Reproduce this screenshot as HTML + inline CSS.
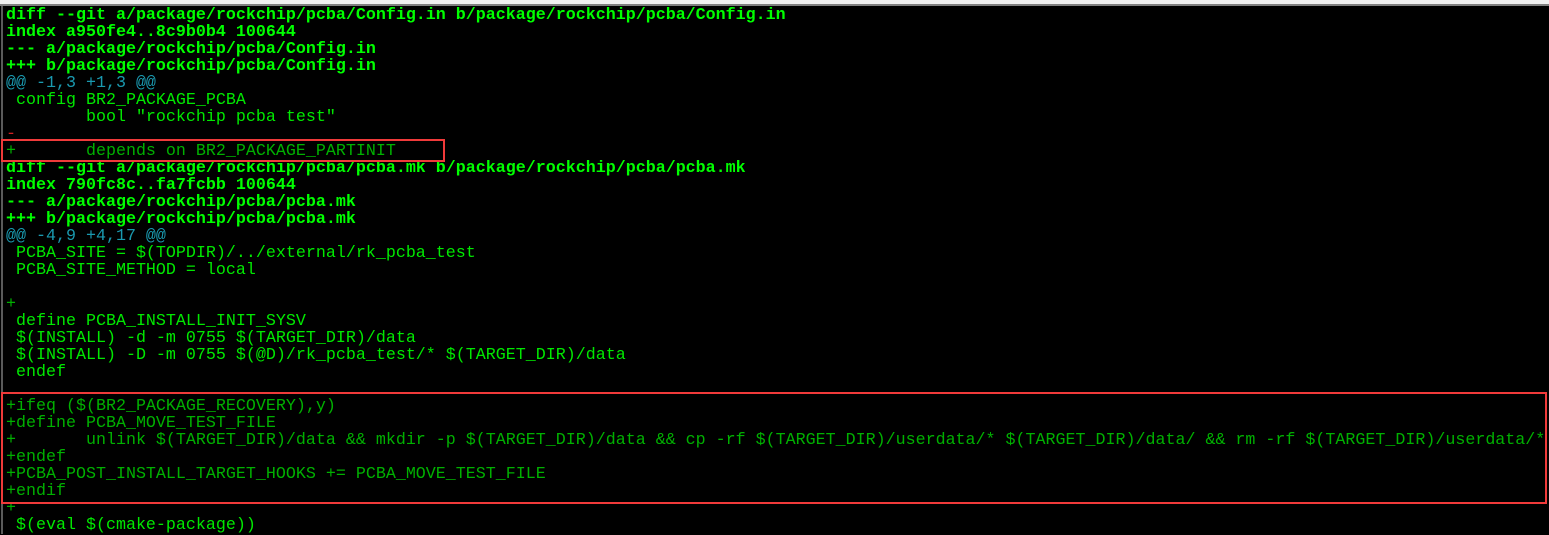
<!DOCTYPE html>
<html><head><meta charset="utf-8"><style>
html,body{margin:0;padding:0;width:1549px;height:534px;overflow:hidden;background:#000}
.top{position:absolute;left:0;top:0;width:1549px;height:4px;background:#f0f0f0}
.tl{position:absolute;left:0;top:4px;width:1549px;height:2px;background:#808080}
.ll{position:absolute;left:1px;top:6px;width:2px;height:528px;background:#5a5a5a}
pre{position:absolute;left:6px;top:7px;margin:0;font-family:"Liberation Mono",monospace;font-size:16.67px;line-height:17px;color:#00e800;white-space:pre}
.b{font-weight:bold;color:#00ff00}
.c{color:#1a9ab0}
.p{color:#00b000}
.r{color:#d02020}
.box{position:absolute;border:2px solid #f03a3a;box-sizing:border-box}
</style></head><body>
<div class="top"></div><div class="tl"></div><div class="ll"></div>
<pre><span class="b">diff --git a/package/rockchip/pcba/Config.in b/package/rockchip/pcba/Config.in
index a950fe4..8c9b0b4 100644
--- a/package/rockchip/pcba/Config.in
+++ b/package/rockchip/pcba/Config.in</span>
<span class="c">@@ -1,3 +1,3 @@</span>
 config BR2_PACKAGE_PCBA
        bool "rockchip pcba test"
<span class="r">-</span>
<span class="p">+       depends on BR2_PACKAGE_PARTINIT</span>
<span class="b">diff --git a/package/rockchip/pcba/pcba.mk b/package/rockchip/pcba/pcba.mk
index 790fc8c..fa7fcbb 100644
--- a/package/rockchip/pcba/pcba.mk
+++ b/package/rockchip/pcba/pcba.mk</span>
<span class="c">@@ -4,9 +4,17 @@</span>
 PCBA_SITE = $(TOPDIR)/../external/rk_pcba_test
 PCBA_SITE_METHOD = local

<span class="p">+</span>
 define PCBA_INSTALL_INIT_SYSV
 $(INSTALL) -d -m 0755 $(TARGET_DIR)/data
 $(INSTALL) -D -m 0755 $(@D)/rk_pcba_test/* $(TARGET_DIR)/data
 endef

<span class="p">+ifeq ($(BR2_PACKAGE_RECOVERY),y)
+define PCBA_MOVE_TEST_FILE
+       unlink $(TARGET_DIR)/data &amp;&amp; mkdir -p $(TARGET_DIR)/data &amp;&amp; cp -rf $(TARGET_DIR)/userdata/* $(TARGET_DIR)/data/ &amp;&amp; rm -rf $(TARGET_DIR)/userdata/*
+endef
+PCBA_POST_INSTALL_TARGET_HOOKS += PCBA_MOVE_TEST_FILE
+endif
+</span>
 $(eval $(cmake-package))</pre>
<div class="box" style="left:1px;top:139px;width:444px;height:23px"></div>
<div class="box" style="left:1px;top:392px;width:1546px;height:112px"></div>
</body></html>
